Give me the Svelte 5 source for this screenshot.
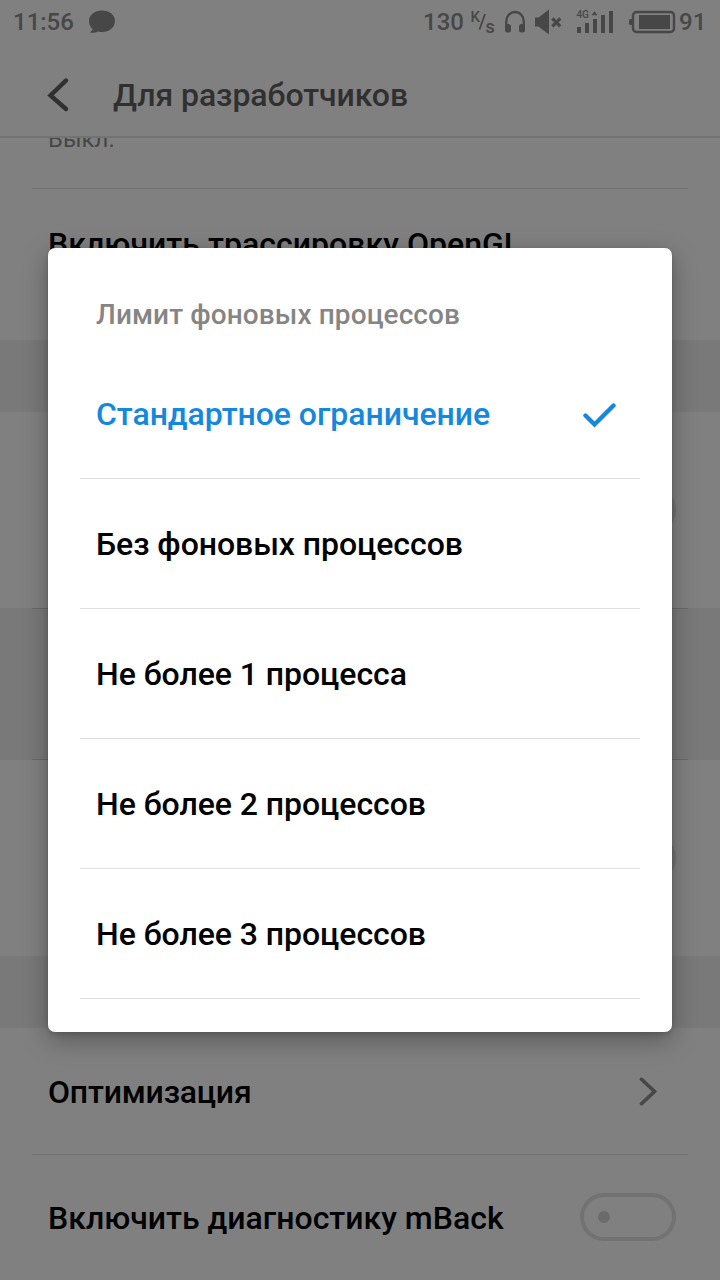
<script>
  const limits = [
    'Стандартное ограничение',
    'Без фоновых процессов',
    'Не более 1 процесса',
    'Не более 2 процессов',
    'Не более 3 процессов'
  ];
  let selected = $state(0);
</script>

<div class="screen">
  <header class="status">
    <span class="time">11:56</span>
    <svg class="bubble" width="28" height="26" viewBox="0 0 28 26">
      <path fill="#474747" d="M14 1.500C6.500 1.500 1 5.900 1 12c0 3.800 1.600 6.400 3.800 8.300L2 23.700c4 .2 6.500-.2 8.200-1.200 1.200.4 2.400.5 3.800.5 7.500 0 13-4.900 13-11S21.500 1.500 14 1.500z" />
    </svg>
    <span class="rate">130</span>
    <svg class="icons" width="210" height="40" viewBox="468 0 210 40" fill="#474747">
      <text x="470.500" y="22" font-size="15" font-weight="500">K</text>
      <path d="M479.500 29.500l5.500-15.500" stroke="#474747" stroke-width="1.800" fill="none" />
      <text x="485.500" y="32.500" font-size="18" font-weight="500">s</text>
      <path d="M506.200 27v-5.500a8.800 9.500 0 0 1 17.600 0V27" fill="none" stroke="#474747" stroke-width="2.300" />
      <rect x="505" y="24" width="6" height="8.500" rx="2.500" />
      <rect x="519" y="24" width="6" height="8.500" rx="2.500" />
      <path d="M535 17.500h3.500L549 9.500v25l-10.500-8H535z" />
      <path d="M552.300 18.300l8 8m0-8l-8 8" stroke="#474747" stroke-width="3.200" />
      <text x="576.500" y="18" font-size="10" font-weight="500" letter-spacing="-.2">4G</text>
      <path d="M591.500 15.300l3-4 3 4z" />
      <path d="M577 27h4v6h-4zM585 23h4v10h-4zM593 19h4v14h-4zM601 15h4v18h-4zM609 11h4v22h-4z" />
      <rect x="633" y="12" width="41" height="20" rx="3.500" fill="none" stroke="#474747" stroke-width="2.400" />
      <path d="M639 15h31v14h-31zM632 19h-1.500q-1.500 0-1.500 1.500v3q0 1.500 1.500 1.500h1.500z" />
    </svg>
    <span class="charge">91</span>
  </header>

  <nav class="bar">
    <svg width="24" height="38" viewBox="0 0 24 38" fill="none" stroke="#303030" stroke-width="4.400" stroke-linecap="round">
      <path d="M20 4.500L4.500 19.500l15.500 13.500" />
    </svg>
    <h1>Для разработчиков</h1>
  </nav>

  <main>
    <section class="first">
      <p class="hint">Выкл.</p>
      <div class="rule top"></div>
      <p class="label trace">Включить трассировку OpenGL</p>
    </section>
    <div class="band short"></div>
    <section class="block"><span class="switch"></span></section>
    <div class="band tall"></div>
    <section class="block"><span class="switch"></span></section>
    <div class="band short"></div>
    <section class="row optimise">
      <span class="label">Оптимизация</span>
      <svg width="20" height="32" viewBox="0 0 20 32" fill="none" stroke="#474747" stroke-width="3.600" stroke-linecap="round">
        <path d="M2.500 3.300L15.500 15.500 2.500 27.700" />
      </svg>
    </section>
    <div class="rule"></div>
    <section class="row mback">
      <span class="label">Включить диагностику mBack</span>
      <span class="switch"></span>
    </section>
  </main>

  <div class="dialog" role="dialog">
    <h2>Лимит фоновых процессов</h2>
    <ul>
      {#each limits as limit, i}
        <li>
          <button class:active={selected === i} onclick={() => (selected = i)}>
            <span>{limit}</span>
            {#if selected === i}
              <svg width="34" height="28" viewBox="0 0 34 28" fill="none" stroke="#1488df" stroke-width="4.400" stroke-linecap="round">
                <path d="M3.500 15.500L12.500 24.500 31.500 5.500" />
              </svg>
            {/if}
          </button>
        </li>
      {/each}
    </ul>
  </div>
</div>

<style>
  :global(body) { background: #808080; }
  .screen {
    position: relative;
    width: 720px;
    height: 1280px;
    overflow: hidden;
    display: flex;
    flex-direction: column;
    background: #808080;
    color: #000;
    font-family: Roboto, sans-serif;
    font-weight: 500;
  }
  .screen * { box-sizing: border-box; }
  h1, h2, p, ul { margin: 0; padding: 0; font-weight: 500; }
  svg { display: block; flex: none; }
  .status {
    height: 50px;
    display: flex;
    padding: 0 13px;
    color: #474747;
    font-size: 24px;
    line-height: 44px;
    white-space: nowrap;
  }
  .time { width: 75px; }
  .bubble { margin-top: 9px; }
  .rate { margin-left: auto; width: 45px; }
  .icons { overflow: visible; }
  .charge { width: 29px; padding-left: 1px; }
  .bar {
    height: 88px;
    flex: none;
    display: flex;
    padding-left: 46px;
    border-bottom: 2px solid #727272;
  }
  .bar svg { margin-top: 26px; }
  h1 {
    margin-left: 43px;
    color: #303030;
    font-size: 32px;
    line-height: 90px;
    letter-spacing: -.06px;
    white-space: nowrap;
  }
  main { flex: 1; overflow: hidden; }
  .first { height: 202px; overflow: hidden; }
  .hint {
    height: 50px;
    margin-top: -13px;
    padding-left: 48px;
    color: #474747;
    font-size: 24px;
    font-weight: 400;
    line-height: 29px;
  }
  .rule { height: 1px; margin: 0 32px; background: #727272; }
  .rule.top { margin-top: 13px; }
  .label { font-size: 32px; line-height: 40px; white-space: nowrap; }
  .trace { margin: 35px 0 0 48px; letter-spacing: .04px; }
  .band { background: #797979; }
  .short { height: 72px; }
  .tall {
    height: 152px;
    background:
      linear-gradient(#696969, #696969) 32px 0 / 656px 1px no-repeat,
      linear-gradient(#696969, #696969) 32px 100% / 656px 1px no-repeat,
      #797979;
  }
  .block, .row {
    display: flex;
    justify-content: space-between;
    align-items: center;
    padding: 0 44px 0 48px;
  }
  .block { height: 196px; justify-content: flex-end; }
  .row.optimise { height: 126px; padding: 1px 61px 0 48px; }
  .optimise .label { letter-spacing: -.2px; }
  .row.mback { height: 125px; padding-bottom: 1px; }
  .mback .label { padding-top: 2px; }
  .switch {
    width: 96px;
    height: 48px;
    border: 4px solid #727272;
    border-radius: 24px;
    display: flex;
    align-items: center;
    padding-left: 14px;
  }
  .switch::before {
    content: '';
    width: 12px;
    height: 12px;
    border-radius: 50%;
    background: #6b6b6b;
  }
  .dialog {
    position: absolute;
    left: 48px;
    top: 248px;
    width: 624px;
    height: 784px;
    overflow: hidden;
    padding-top: 47px;
    border-radius: 7px;
    background: #fff;
    box-shadow: 0 8px 26px rgba(0, 0, 0, .3), 0 2px 5px rgba(0, 0, 0, .16);
  }
  h2 {
    height: 54px;
    padding-left: 48px;
    color: #858585;
    font-size: 28px;
    line-height: 40px;
    letter-spacing: .1px;
    white-space: nowrap;
  }
  ul { list-style: none; padding: 0 32px; }
  li { height: 130px; border-bottom: 1px solid #dfdfdf; }
  button {
    width: 100%;
    height: 129px;
    display: flex;
    align-items: center;
    justify-content: space-between;
    padding: 0 24px 0 16px;
    border: 0;
    background: none;
    color: #000;
    font: 500 32px/40px Roboto, sans-serif;
    letter-spacing: -.05px;
    white-space: nowrap;
  }
  .active { color: #1488df; }
</style>
